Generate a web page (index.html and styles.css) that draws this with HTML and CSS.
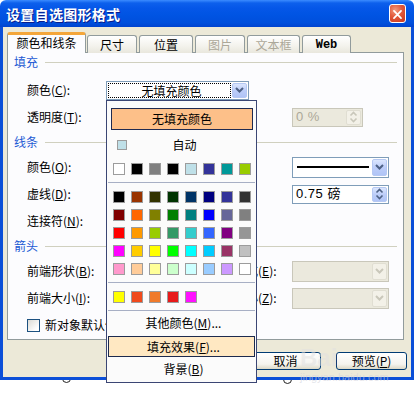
FILE: index.html
```html
<!DOCTYPE html>
<html>
<head>
<meta charset="utf-8">
<title>设置自选图形格式</title>
<link rel="stylesheet" href="styles.css">
</head>
<body>
<div class="stage">
  <div class="window">
    <div class="titlebar">
      <span class="title">设置自选图形格式</span>
      <span class="close">
        <svg width="17" height="19" viewBox="0 0 17 19"><path d="M4.5 5.5 L12.5 13.5 M12.5 5.5 L4.5 13.5" stroke="#fff" stroke-width="2" stroke-linecap="round"/></svg>
      </span>
    </div>
    <div class="client">
      <div class="tabs">
        <div class="tab active w1">颜色和线条</div>
        <div class="tab w2">尺寸</div>
        <div class="tab w3">位置</div>
        <div class="tab disabled w4">图片</div>
        <div class="tab disabled w5">文本框</div>
        <div class="tab web w6">Web</div>
      </div>
      <div class="panel">
        <div class="section"><span>填充</span><i></i></div>
        <div class="row r-first">
          <span class="lbl">颜色(<u>C</u>):</span>
          <div class="combo fillcombo">
            <span class="focus">无填充颜色</span>
            <span class="arrow"><svg width="9" height="6" viewBox="0 0 9 6"><path d="M1 1 L4.5 4.5 L8 1" fill="none" stroke="#4d6185" stroke-width="2"/></svg></span>
          </div>
        </div>
        <div class="row">
          <span class="lbl">透明度(<u>T</u>):</span>
          <span></span><span></span>
          <div class="spin disabled short">
            <span class="val">0 %</span>
            <span class="spinbtn"><svg width="9" height="12" viewBox="0 0 9 12"><path d="M1.5 4.5 L4.5 1.5 L7.5 4.5 M1.5 7.5 L4.5 10.5 L7.5 7.5" fill="none" stroke="#c9c7ba" stroke-width="1.6"/></svg></span>
          </div>
        </div>
        <div class="section"><span>线条</span><i></i></div>
        <div class="row">
          <span class="lbl">颜色(<u>O</u>):</span>
          <span></span>
          <span class="rlbl">线型(<u>S</u>):</span>
          <div class="combo linecombo">
            <span class="line"></span>
            <span class="arrow"><svg width="9" height="6" viewBox="0 0 9 6"><path d="M1 1 L4.5 4.5 L8 1" fill="none" stroke="#4d6185" stroke-width="2"/></svg></span>
          </div>
        </div>
        <div class="row">
          <span class="lbl">虚线(<u>D</u>):</span>
          <span></span>
          <span class="rlbl">粗细(<u>W</u>):</span>
          <div class="spin">
            <span class="val">0.75 磅</span>
            <span class="spinbtn"><svg width="9" height="12" viewBox="0 0 9 12"><path d="M1.5 4.5 L4.5 1.5 L7.5 4.5 M1.5 7.5 L4.5 10.5 L7.5 7.5" fill="none" stroke="#4d6185" stroke-width="1.6"/></svg></span>
          </div>
        </div>
        <div class="row">
          <span class="lbl">连接符(<u>N</u>):</span>
        </div>
        <div class="section"><span>箭头</span><i></i></div>
        <div class="row">
          <span class="lbl">前端形状(<u>B</u>):</span>
          <span></span>
          <span class="rlbl">末端样式(<u>E</u>):</span>
          <div class="combo disabled">
            <span class="arrow"><svg width="9" height="6" viewBox="0 0 9 6"><path d="M1 1 L4.5 4.5 L8 1" fill="none" stroke="#c9c7ba" stroke-width="2"/></svg></span>
          </div>
        </div>
        <div class="row">
          <span class="lbl">前端大小(<u>I</u>):</span>
          <span></span>
          <span class="rlbl">末端大小(<u>Z</u>):</span>
          <div class="combo disabled">
            <span class="arrow"><svg width="9" height="6" viewBox="0 0 9 6"><path d="M1 1 L4.5 4.5 L8 1" fill="none" stroke="#c9c7ba" stroke-width="2"/></svg></span>
          </div>
        </div>
        <div class="row check">
          <span class="box"></span>
          <span>新对象默认值(<u>F</u>)</span>
        </div>
      </div>
      <div class="buttons">
        <span class="btn"></span>
        <span class="btn">取消</span>
        <span class="btn">预览(<u>P</u>)</span>
      </div>
    </div>
  </div>

  <span class="handle h1"></span>
  <span class="handle h2"></span>

  <div class="watermark"><b>Bai</b><span>jingyan.baidu.com</span></div>

  <div class="popup">
    <div class="nofill">无填充颜色</div>
    <div class="auto"><span class="sw" style="background:#bfe0e8"></span><span class="autotxt">自动</span></div>
    <div class="grid g-top">
      <span class="sw" style="background:#ffffff"></span>
      <span class="sw" style="background:#000000"></span>
      <span class="sw" style="background:#808080"></span>
      <span class="sw" style="background:#000000"></span>
      <span class="sw" style="background:#bfe0e8"></span>
      <span class="sw" style="background:#333399"></span>
      <span class="sw" style="background:#009999"></span>
      <span class="sw" style="background:#99cc00"></span>
    </div>
    <div class="sep"></div>
    <div class="grid g-main">
      <span class="sw" style="background:#000000"></span>
      <span class="sw" style="background:#993300"></span>
      <span class="sw" style="background:#333300"></span>
      <span class="sw" style="background:#003300"></span>
      <span class="sw" style="background:#003366"></span>
      <span class="sw" style="background:#000080"></span>
      <span class="sw" style="background:#333399"></span>
      <span class="sw" style="background:#333333"></span>

      <span class="sw" style="background:#800000"></span>
      <span class="sw" style="background:#ff6600"></span>
      <span class="sw" style="background:#808000"></span>
      <span class="sw" style="background:#008000"></span>
      <span class="sw" style="background:#008080"></span>
      <span class="sw" style="background:#0000ff"></span>
      <span class="sw" style="background:#666699"></span>
      <span class="sw" style="background:#808080"></span>

      <span class="sw" style="background:#ff0000"></span>
      <span class="sw" style="background:#ff9900"></span>
      <span class="sw" style="background:#99cc00"></span>
      <span class="sw" style="background:#339966"></span>
      <span class="sw" style="background:#33cccc"></span>
      <span class="sw" style="background:#3366ff"></span>
      <span class="sw" style="background:#800080"></span>
      <span class="sw" style="background:#969696"></span>

      <span class="sw" style="background:#ff00ff"></span>
      <span class="sw" style="background:#ffcc00"></span>
      <span class="sw" style="background:#ffff00"></span>
      <span class="sw" style="background:#00ff00"></span>
      <span class="sw" style="background:#00ffff"></span>
      <span class="sw" style="background:#00ccff"></span>
      <span class="sw" style="background:#993366"></span>
      <span class="sw" style="background:#c0c0c0"></span>

      <span class="sw" style="background:#ff99cc"></span>
      <span class="sw" style="background:#ffcc99"></span>
      <span class="sw" style="background:#ffff99"></span>
      <span class="sw" style="background:#ccffcc"></span>
      <span class="sw" style="background:#ccffff"></span>
      <span class="sw" style="background:#99ccff"></span>
      <span class="sw" style="background:#cc99ff"></span>
      <span class="sw" style="background:#ffffff"></span>
    </div>
    <div class="sep"></div>
    <div class="grid g-recent">
      <span class="sw" style="background:#ffff00"></span>
      <span class="sw" style="background:#f04a1c"></span>
      <span class="sw" style="background:#f07a2a"></span>
      <span class="sw" style="background:#e81a1a"></span>
      <span class="sw" style="background:#ff10ff"></span>
    </div>
    <div class="sep"></div>
    <div class="item">其他颜色(<u>M</u>)...</div>
    <div class="item hot">填充效果(<u>F</u>)...</div>
    <div class="item">背景(<u>B</u>)</div>
  </div>
</div>
</body>
</html>
```

FILE: styles.css
```css
* { box-sizing: border-box; }

html, body {
  margin: 0;
  padding: 0;
  background: #ffffff;
}

body {
  font-family: "Noto Sans CJK SC", "Liberation Sans", sans-serif;
  font-size: 12px;
  line-height: 14px;
  color: #000;
}

.stage {
  position: relative;
  width: 414px;
  height: 393px;
  overflow: hidden;
}

/* ---------- window ---------- */
.window {
  position: relative;
  z-index: 2;
  width: 414px;
  height: 380px;
  display: flex;
  flex-direction: column;
}

.titlebar {
  height: 27px;
  flex: none;
  display: flex;
  align-items: center;
  justify-content: space-between;
  padding: 0 8px 0 6px;
  background: linear-gradient(#3b8cff 0, #0d60ec 3px, #0557e8 8px, #0054e3 55%, #004fdc 85%, #0043cf 100%);
  border-radius: 6px 6px 0 0;
}

.title {
  color: #fff;
  font-weight: bold;
  font-size: 14px;
  letter-spacing: 0.3px;
  text-shadow: 1px 1px 0 #0a1e8c;
}

.close {
  width: 17px;
  height: 19px;
  display: flex;
  border: 1px solid #fff;
  border-radius: 3px;
  background: radial-gradient(circle at 35% 30%, #f29a7e 0, #e2583a 45%, #c8361c 100%);
}

.client {
  flex: 1;
  display: flex;
  flex-direction: column;
  background: #ece9d8;
  border: 3px solid #0b4fd8;
  border-top: none;
  padding: 5px 4px 0 4px;
}

/* ---------- tabs ---------- */
.tabs {
  display: flex;
  align-items: flex-end;
  height: 21px;
  position: relative;
  z-index: 1;
  margin-bottom: -1px;
}

.tab {
  height: 18px;
  display: flex;
  align-items: center;
  justify-content: center;
  border: 1px solid #919b9c;
  border-bottom: none;
  border-radius: 3px 3px 0 0;
  background: linear-gradient(#ffffff, #f3f2ec 60%, #e9e7dd);
  margin-right: 2px;
}

.tab.active {
  height: 21px;
  background: #fcfcfe;
  border-top: 3px solid #f4a63a;
  margin-right: 1px;
  padding-bottom: 2px;
}

.tab.disabled { color: #aca899; }

.tab.web {
  font-family: "Liberation Mono", "DejaVu Sans Mono", monospace;
  font-weight: bold;
  font-size: 12px;
}

.w1 { width: 79px; }
.w2 { width: 50px; }
.w3 { width: 54px; }
.w4 { width: 50px; }
.w5 { width: 53px; }
.w6 { width: 49px; }

/* ---------- panel ---------- */
.panel {
  width: 397px;
  height: 288px;
  flex: none;
  background: #fcfcfe;
  border: 1px solid #919b9c;
  display: flex;
  flex-direction: column;
  gap: 5px;
}

.section {
  height: 18px;
  display: flex;
  align-items: center;
  gap: 7px;
  padding: 0 6px;
  color: #1d5ad4;
}

.section i {
  flex: 1;
  border-top: 1px solid #d0d0bf;
}

.row {
  height: 22px;
  display: grid;
  grid-template-columns: 79px 104px 82px 97px;
  align-items: center;
  padding-left: 19px;
}

.row.r-first { margin-top: 3px; }

.rlbl { white-space: nowrap; }

.combo {
  height: 21px;
  border: 1px solid #7f9db9;
  background: #fff;
  display: flex;
  align-items: center;
  justify-content: flex-end;
  padding: 1px;
}

.combo .arrow {
  width: 15px;
  height: 17px;
  border: 1px solid #b5c8f3;
  border-radius: 2px;
  background: linear-gradient(#dbe6fe, #bccdf9 50%, #b0c4f6);
  display: flex;
  align-items: center;
  justify-content: center;
}

.combo.fillcombo {
  grid-column: 2 / 4;
  width: 143px;
  height: 19px;
  padding: 1px;
  gap: 1px;
}

.combo.fillcombo .focus {
  flex: 1;
  height: 15px;
  border: 1px dotted #000;
  text-align: center;
  line-height: 13px;
  padding-left: 4px;
}

.combo.fillcombo .arrow { height: 15px; }

.combo.linecombo { gap: 3px; padding-left: 4px; }

.combo .line {
  flex: 1;
  height: 0;
  border-top: 2px solid #000;
}

.combo.disabled,
.spin.disabled {
  background: #ebe9dd;
  border-color: #c9c7ba;
}

.combo.disabled .arrow,
.spin.disabled .spinbtn {
  background: #f3f1e8;
  border-color: #e0ded2;
}

.spin {
  height: 19px;
  border: 1px solid #7f9db9;
  background: #fff;
  display: flex;
  align-items: center;
  padding: 1px 1px 1px 3px;
  font-family: "Liberation Sans", "Noto Sans CJK SC", sans-serif;
}

.spin .val {
  flex: 1;
  font-family: "Liberation Sans", "Noto Sans CJK SC", sans-serif;
  font-size: 13px;
  letter-spacing: 0.5px;
}

.spin.disabled .val { color: #aca899; }

.spin.short { width: 71px; }

.spinbtn {
  width: 15px;
  height: 15px;
  border: 1px solid #b5c8f3;
  border-radius: 2px;
  background: linear-gradient(#dbe6fe, #bccdf9 50%, #b0c4f6);
  display: flex;
  align-items: center;
  justify-content: center;
}

.row.check {
  display: flex;
  gap: 5px;
  align-items: center;
}

.box {
  width: 13px;
  height: 13px;
  border: 1px solid #1c5180;
  background: linear-gradient(135deg, #dcdbd5, #ffffff 80%);
}

/* ---------- buttons ---------- */
.buttons {
  display: flex;
  justify-content: flex-end;
  gap: 15px;
  margin-top: 12px;
  padding-right: 0;
}

.btn {
  width: 71px;
  height: 18px;
  border: 1px solid #003c74;
  border-radius: 3px;
  background: linear-gradient(#ffffff, #f4f3ee 70%, #dcd8c6);
  display: flex;
  align-items: center;
  justify-content: center;
}

.btn:first-child { margin-right: -7px; }

/* ---------- selection handles ---------- */
.handle {
  position: absolute;
  z-index: 1;
  top: 374px;
  width: 9px;
  height: 9px;
  border: 1px solid #222;
  border-radius: 50%;
  background: #fff;
}
.h1 { left: 62px; }
.h2 { left: 283px; top: 375px; }

/* ---------- watermark ---------- */
.watermark {
  position: absolute;
  z-index: 3;
  left: 300px;
  top: 345px;
  display: flex;
  flex-direction: column;
  color: rgba(225, 225, 225, 0.55);
  pointer-events: none;
}
.watermark b {
  font-family: "Liberation Sans", sans-serif;
  font-size: 24px;
  line-height: 26px;
}
.watermark span {
  font-family: "Liberation Sans", sans-serif;
  font-size: 11px;
  line-height: 12px;
  color: rgba(210, 210, 220, 0.6);
}

/* ---------- colour popup ---------- */
.popup {
  position: absolute;
  z-index: 4;
  left: 106px;
  top: 100px;
  width: 151px;
  height: 283px;
  border: 1px solid #3b4674;
  background: #fbfbfb;
  display: flex;
  flex-direction: column;
}

.nofill {
  margin: 7px 3px 0 4px;
  height: 22px;
  border: 1px solid #1f2a50;
  background: #fdc089;
  display: flex;
  align-items: center;
  justify-content: center;
}

.auto {
  margin-top: 9px;
  height: 12px;
  display: flex;
  align-items: center;
  padding-left: 10px;
}

.auto .sw { width: 10px; height: 10px; }

.autotxt {
  flex: 1;
  text-align: center;
  padding-right: 14px;
}

.grid {
  display: grid;
  grid-template-columns: repeat(8, 12px);
  column-gap: 6px;
  row-gap: 6px;
  padding-left: 6px;
}

.g-top { margin-top: 12px; }
.g-main { margin-top: 8px; }
.g-recent { margin-top: 8px; }

.sw {
  width: 12px;
  height: 12px;
  border: 1px solid #9c9c9c;
}

.sep {
  height: 1px;
  margin: 7px 1px 0 1px;
  background: #a7afc4;
}

.item {
  height: 20px;
  margin-top: 2px;
  display: flex;
  align-items: center;
  justify-content: center;
  padding-left: 4px;
}

.item.hot {
  height: 21px;
  margin: 3px 1px 0 1px;
  background: #ffe8c2;
  border: 1px solid #1c2a4e;
}
```
